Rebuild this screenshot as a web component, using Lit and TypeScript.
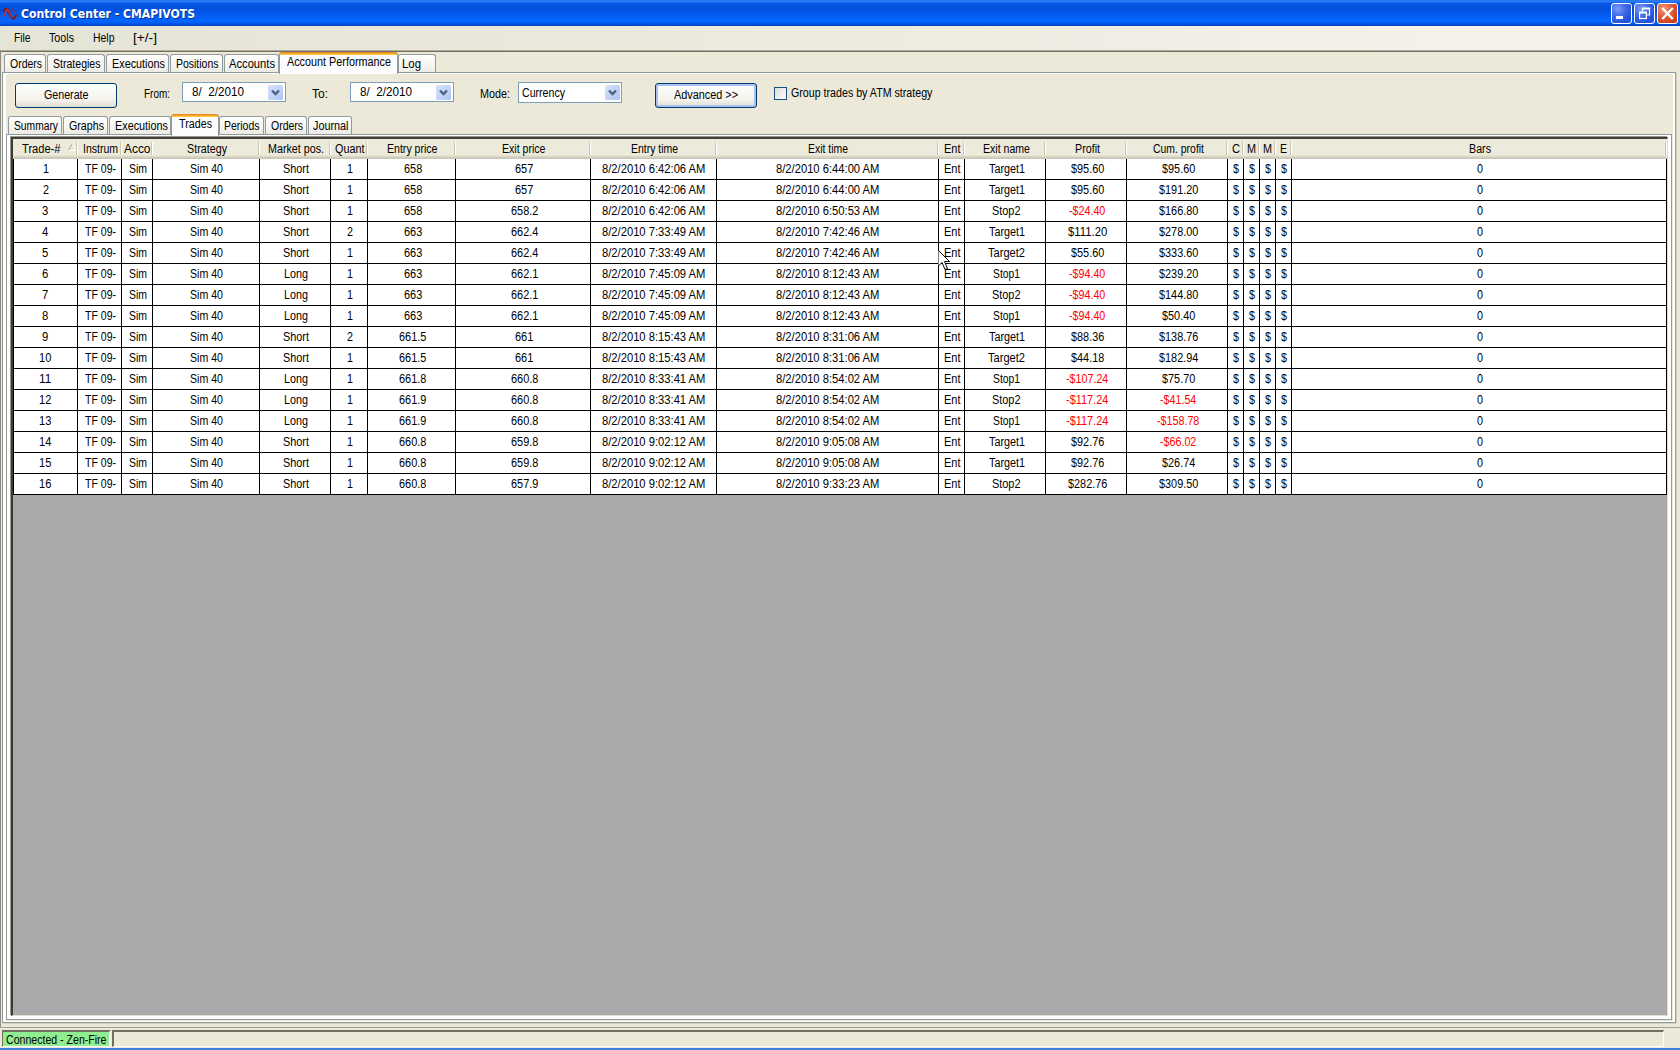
import { LitElement, html, css, svg } from 'lit';
import { customElement } from 'lit/decorators.js';

const UI_FONT = "12.5px 'Liberation Sans'";
const TITLE_FONT = "bold 13px 'DejaVu Sans Condensed'";
const pen = document.createElement('canvas').getContext('2d')!;

/** Condenses a label so that it takes exactly `width` pixels. */
function fit(text: string, width: number, font = UI_FONT) {
  pen.font = font;
  const ratio = width / pen.measureText(text).width;
  return html`<span class="fit" style="width:${width}px"><span class="glyphs" style="transform:scaleX(${ratio.toFixed(4)})">${text}</span></span>`;
}

const WIDTHS: Record<string, number> = {
  'TF 09-': 31, Sim: 18, 'Sim 40': 33, Short: 26, Long: 24, Ent: 16.5,
  Target1: 36, Target2: 37, Stop1: 27, Stop2: 28.5, $: 6, '0': 6, '1': 6, '2': 6,
};

function cellWidth(text: string): number {
  if (WIDTHS[text]) return WIDTHS[text];
  if (text.endsWith('AM')) return 104;
  let w = 0;
  for (const ch of text) w += ch === '.' || ch === '-' ? 3 : 6;
  return w + 0.3;
}

interface Column { title: string; width: number; textWidth: number; kind?: string }

const COLUMNS: Column[] = [
  { title: 'Trade-#', width: 65, textWidth: 38.5, kind: 'sorted' },
  { title: 'Instrum', width: 44, textWidth: 35 },
  { title: 'Acco', width: 31, textWidth: 26.5 },
  { title: 'Strategy', width: 107, textWidth: 40 },
  { title: 'Market pos.', width: 71, textWidth: 56 },
  { title: 'Quant', width: 37, textWidth: 29.5 },
  { title: 'Entry price', width: 88, textWidth: 50.5, kind: 'price' },
  { title: 'Exit price', width: 135, textWidth: 43.5, kind: 'price' },
  { title: 'Entry time', width: 126, textWidth: 47 },
  { title: 'Exit time', width: 222, textWidth: 40 },
  { title: 'Ent', width: 26, textWidth: 16.5 },
  { title: 'Exit name', width: 81, textWidth: 47, kind: 'price' },
  { title: 'Profit', width: 81, textWidth: 25, kind: 'price' },
  { title: 'Cum. profit', width: 101, textWidth: 51, kind: 'price' },
  { title: 'C', width: 16, textWidth: 8, kind: 'slim' },
  { title: 'M', width: 16, textWidth: 9, kind: 'slim' },
  { title: 'M', width: 16, textWidth: 9, kind: 'slim' },
  { title: 'E', width: 16, textWidth: 7, kind: 'slim' },
  { title: 'Bars', width: 375, textWidth: 22 },
];

const TRADES: string[][] = [
  ['Short', '1', '658', '657', '6:42:06', '6:44:00', 'Target1', '$95.60', '$95.60'],
  ['Short', '1', '658', '657', '6:42:06', '6:44:00', 'Target1', '$95.60', '$191.20'],
  ['Short', '1', '658', '658.2', '6:42:06', '6:50:53', 'Stop2', '-$24.40', '$166.80'],
  ['Short', '2', '663', '662.4', '7:33:49', '7:42:46', 'Target1', '$111.20', '$278.00'],
  ['Short', '1', '663', '662.4', '7:33:49', '7:42:46', 'Target2', '$55.60', '$333.60'],
  ['Long', '1', '663', '662.1', '7:45:09', '8:12:43', 'Stop1', '-$94.40', '$239.20'],
  ['Long', '1', '663', '662.1', '7:45:09', '8:12:43', 'Stop2', '-$94.40', '$144.80'],
  ['Long', '1', '663', '662.1', '7:45:09', '8:12:43', 'Stop1', '-$94.40', '$50.40'],
  ['Short', '2', '661.5', '661', '8:15:43', '8:31:06', 'Target1', '$88.36', '$138.76'],
  ['Short', '1', '661.5', '661', '8:15:43', '8:31:06', 'Target2', '$44.18', '$182.94'],
  ['Long', '1', '661.8', '660.8', '8:33:41', '8:54:02', 'Stop1', '-$107.24', '$75.70'],
  ['Long', '1', '661.9', '660.8', '8:33:41', '8:54:02', 'Stop2', '-$117.24', '-$41.54'],
  ['Long', '1', '661.9', '660.8', '8:33:41', '8:54:02', 'Stop1', '-$117.24', '-$158.78'],
  ['Short', '1', '660.8', '659.8', '9:02:12', '9:05:08', 'Target1', '$92.76', '-$66.02'],
  ['Short', '1', '660.8', '659.8', '9:02:12', '9:05:08', 'Target1', '$92.76', '$26.74'],
  ['Short', '1', '660.8', '657.9', '9:02:12', '9:33:23', 'Stop2', '$282.76', '$309.50'],
];

function tradeCells(t: string[], i: number): string[] {
  const [pos, qty, entry, exit, entryTime, exitTime, name, profit, cum] = t;
  return [
    `${i + 1}`, 'TF 09-', 'Sim', 'Sim 40', pos, qty, entry, exit,
    `8/2/2010 ${entryTime} AM`, `8/2/2010 ${exitTime} AM`, 'Ent', name, profit, cum,
    '$', '$', '$', '$', '0',
  ];
}

interface Tab { label: string; width: number; textWidth: number; pad: number; gap: number; active?: boolean }

const MAIN_TABS: Tab[] = [
  { label: 'Orders', width: 42, textWidth: 32, pad: 5, gap: 1 },
  { label: 'Strategies', width: 58, textWidth: 47.5, pad: 5, gap: 1 },
  { label: 'Executions', width: 63, textWidth: 53, pad: 5, gap: 1 },
  { label: 'Positions', width: 53, textWidth: 42.5, pad: 5, gap: 1 },
  { label: 'Accounts', width: 55, textWidth: 46, pad: 4, gap: 0 },
  { label: 'Account Performance', width: 119, textWidth: 104, pad: 7, gap: 0, active: true },
  { label: 'Log', width: 38, textWidth: 19, pad: 3, gap: 0 },
];

const INNER_TABS: Tab[] = [
  { label: 'Summary', width: 54, textWidth: 44, pad: 5, gap: 1 },
  { label: 'Graphs', width: 45, textWidth: 35, pad: 5, gap: 1 },
  { label: 'Executions', width: 62, textWidth: 53, pad: 5, gap: 0 },
  { label: 'Trades', width: 48, textWidth: 33, pad: 7, gap: 0, active: true },
  { label: 'Periods', width: 45, textWidth: 35.5, pad: 4, gap: 1 },
  { label: 'Orders', width: 42, textWidth: 32, pad: 5, gap: 1 },
  { label: 'Journal', width: 44, textWidth: 35.5, pad: 4, gap: 0 },
];

const tabStrip = (tabs: Tab[], extra: string) => html`
  <div class="tabs ${extra}">
    ${tabs.map(t => html`<div class="tab ${t.active ? 'active' : ''}"
      style="width:${t.width}px;padding-left:${t.pad}px;margin-right:${t.gap}px">${fit(t.label, t.textWidth)}</div>`)}
  </div>`;

const dropButton = html`
  <svg class="drop" width="16" height="16" viewBox="0 0 16 16">
    <defs><linearGradient id="g" x2="1" y2="1"><stop stop-color="#d7e2fe"/><stop offset="1" stop-color="#afc4f5"/></linearGradient></defs>
    <rect width="15" height="15" rx="1.5" fill="url(#g)"/>
    <path d="M4 5.5 7.5 9 11 5.5" fill="none" stroke="#4d6185" stroke-width="2.4"/>
  </svg>`;

const GLYPHS = {
  min: svg`<rect x="5" y="13" width="7" height="3" fill="#fff"/>`,
  restore: svg`<path d="M8.5 8V5.5h7V12H13" fill="none" stroke="#fff" stroke-width="1.2"/><path d="M8 5.5h8" stroke="#fff" stroke-width="2"/>
    <rect x="5.6" y="9.5" width="6.8" height="6" fill="none" stroke="#fff" stroke-width="1.2"/><path d="M5 9.5h8" stroke="#fff" stroke-width="2"/>`,
  close: svg`<path d="M6 5.8 15 15.2M15 5.8 6 15.2" stroke="#fff" stroke-width="2.3" stroke-linecap="square"/>`,
};

const caption = (kind: 'min' | 'restore' | 'close') => html`
  <button class="caption ${kind}"><svg width="21" height="21" viewBox="0 0 21 21">${GLYPHS[kind]}</svg></button>`;

@customElement('app-root')
export class AppRoot extends LitElement {
  static styles = css`
    :host { display: block; position: relative; width: 1680px; height: 1050px; overflow: hidden;
      font: 12.5px/14px 'Liberation Sans', Arial, sans-serif; color: #000; background: #ece9d8; }
    * { box-sizing: border-box; }
    .window { display: flex; flex-direction: column; height: 1050px; }
    .fit { display: block; white-space: pre; flex: none; text-align: left; }
    .glyphs { display: inline-block; transform-origin: 0 50%; vertical-align: top; }
    .title { height: 26px; flex: none; display: flex; align-items: center; padding: 1px 2px 0 3px;
      background: linear-gradient(#1263e0 0, #3b8dfd 1px, #1a6cf5 2px, #0756e3 4px, #0150dd 8px, #0259ee 14px, #0364fd 19px, #0364fd 22px, #0049cf 25px, #003fc0 26px); }
    .name { font: bold 13px/16px 'DejaVu Sans Condensed', sans-serif; color: #fff; text-shadow: 1px 1px 0 #0a2f94; margin-left: 2px; margin-top: 1px; flex: 1; }
    .caption { width: 21px; height: 21px; padding: 0; margin: 0 0 1px 2px; border: 1px solid #fff; border-radius: 3px; overflow: hidden; flex: none;
      background: radial-gradient(circle at 30% 25%, #7f9cf4 0, #4570ea 35%, #2350d6 75%, #2b64ee 100%); }
    .caption svg { display: block; margin: -1px; }
    .caption.close { background: radial-gradient(circle at 30% 25%, #f09a80 0, #e2603c 40%, #cb3b14 85%, #d8481c 100%); }
    .menu { height: 24px; flex: none; display: flex; align-items: center; padding-left: 14px;
      background: linear-gradient(90deg, #e5e5d7 0, #e9e8db 30%, #f4f2ea 90%); }
    .menu .fit { margin-right: 18.5px; margin-bottom: 1px; }
    .body { height: 977px; flex: none; padding: 1px 3px 0 2px; border: solid #8d8b7e; border-width: 1px 0 0 1px; border-top-color: #b0ad9e; display: flex; flex-direction: column;
      background: linear-gradient(#716f64 1px, #ece9d8 1px); }
    .tabs { display: flex; align-items: flex-end; height: 20px; flex: none; position: relative; z-index: 1; }
    .tab { height: 18px; border: 1px solid #919b9c; border-bottom: 0; border-radius: 3px 3px 0 0; display: flex; align-items: center; padding-top: 1px;
      background: linear-gradient(#fff, #f5f4ef 60%, #ecebe6); }
    .tab.active { height: 22px; margin-bottom: -2px; background: linear-gradient(#f7a92d 1px, #ffc73c 1px 2px, #fcfcfe 2px); border-top: 1px solid #e68b2c; padding-bottom: 3px; padding-top: 0; }
    .main { margin-left: 1px; }
    .outer { width: 1674px; height: 951px; flex: none; margin-left: -1px; border: 1px solid #919b9c; box-shadow: 1px 1px 0 #d6d2c2; padding: 1px 2px 1px 3px; background: #fff; display: flex; flex-direction: column; }
    .content { background: #ece9d8; flex: 1; display: flex; flex-direction: column; }
    .tools { height: 40px; flex: none; display: flex; align-items: flex-start; padding-left: 9px; }
    .tools > * { flex: none; }
    .btn { width: 102px; height: 25px; margin-top: 9px; border: 1px solid #003c74; border-radius: 3px; display: flex; align-items: center; justify-content: center; padding-bottom: 1px;
      background: linear-gradient(#fff, #f3f2ec 70%, #dedbd0); }
    .btn.default { box-shadow: inset 0 0 0 2px #a9c1f0, inset 0 -2px 0 #6982ee; }
    .lbl { margin-top: 13px; height: 14px; display: flex; }
    .lbl.high { margin-top: 12px; }
    .field { height: 20px; width: 104px; margin-top: 8px; border: 1px solid #7f9db9; background: #fff; display: flex; align-items: center; justify-content: space-between; padding-left: 9px; padding-right: 1px; }
    .field.combo { height: 21px; padding-left: 3px; padding-right: 0; }
    .drop { display: block; flex: none; margin-top: 1px; }
    .check { width: 13px; height: 13px; margin-top: 13px; border: 1px solid #1c5180; background: linear-gradient(135deg, #dcdcd7, #fff); }
    .inner { margin-left: 2px; }
    .pane { width: 1666px; height: 886px; flex: none; border: 1px solid #919b9c; background: #fff; padding: 2px 3px 3px 4px; }
    .bezel { height: 879px; border: 2px solid #404040; border-left-color: #3a3a36; border-bottom: 1px solid #e0dccf; border-right: 1px solid #e0dccf; background: #a9a9a9; box-shadow: -1px -1px 0 #9a988a; }
    .row { display: flex; width: 1654px; height: 21px; background: #fff; border-bottom: 1px solid #000; }
    .cell { flex: none; height: 20px; border-right: 1px solid #000; display: flex; align-items: center; justify-content: center; padding-left: 1px; overflow: hidden; }
    .cell.first { border-left: 1px solid #000; padding-left: 0; }
    .cell.price { padding-left: 3px; }
    .cell.neg { color: #f00; }
    .head { height: 20px; background: linear-gradient(#ebeadb 16px, #e2decd 17px, #d6d2c2 18px, #cbc7b8 19px); border-bottom: 0; }
    .head .cell, .head .cell.price { border: 0; padding: 0; position: relative; height: 20px; }
    .head .cell.slim { padding-right: 1px; }
    .head .cell.price { padding-left: 1px; }
    .head .cell::after { content: ''; position: absolute; right: 0; top: 3px; height: 13px; width: 2px; background: linear-gradient(90deg, #c7c5b2 50%, #fff 50%); }
    .head .cell.sorted { justify-content: flex-start; padding-left: 9px; gap: 7px; }
    .head svg { display: block; margin-top: -4px; }
    .status { flex: none; height: 21px; border-top: 1px solid #a5a293; background: #ece9d8; padding: 2px 0 0 2px; display: flex; }
    .slot { height: 17px; border: 1px solid #fff; border-top: 2px solid #716f64; border-left-color: #716f64; display: flex; align-items: center; padding-top: 2px; }
    .slot.ok { width: 109px; background: #90ee90; padding-left: 3px; border-right: 2px solid #f6f5ee; }
    .slot.rest { width: 1552px; margin-left: 1px; border-left-width: 2px; }
    .edge { height: 2px; flex: none; background: #3b80dc; }
    .cursor { position: absolute; left: 938px; top: 250px; }
  `;

  render() {
    return html`
      <div class="window">
        <div class="title">
          <svg width="16" height="16" viewBox="0 0 16 16">
            <path d="M0 6C2 2.500 4 1.500 5 4L8 10.500C10 14 12 13 14 8" fill="none" stroke="#7a1b2e" stroke-width="2.200"/>
            <path d="M1 10.500C2.500 5 4 2 5.500 4.500L9 11" fill="none" stroke="#c4302c" stroke-width="1.500"/>
            <path d="M8 5C9.500 2.500 10.500 3.500 11.500 6.500L14 10.500" fill="none" stroke="#54407e" stroke-width="1.500"/>
          </svg>
          <span class="name">${fit('Control Center - CMAPIVOTS', 174, TITLE_FONT)}</span>
          ${caption('min')}${caption('restore')}${caption('close')}
        </div>
        <div class="menu">
          ${fit('File', 16.5)}${fit('Tools', 25)}${fit('Help', 21.5)}${fit('[+/-]', 24)}
        </div>
        <div class="body">
          ${tabStrip(MAIN_TABS, 'main')}
          <div class="outer"><div class="content">
            <div class="tools">
              <div class="btn">${fit('Generate', 44.5)}</div>
              <div class="lbl" style="margin-left:27px">${fit('From:', 26)}</div>
              <div class="field" style="margin-left:12px">${fit('8/  2/2010', 52)}${dropButton}</div>
              <div class="lbl" style="margin-left:26px">${fit('To:', 16)}</div>
              <div class="field" style="margin-left:22px">${fit('8/  2/2010', 52)}${dropButton}</div>
              <div class="lbl" style="margin-left:26px">${fit('Mode:', 30)}</div>
              <div class="field combo" style="margin-left:8px">${fit('Currency', 43)}${dropButton}</div>
              <div class="btn default" style="margin-left:33px">${fit('Advanced >>', 64)}</div>
              <div class="check" style="margin-left:17px"></div>
              <div class="lbl high" style="margin-left:4px">${fit('Group trades by ATM strategy', 142)}</div>
            </div>
            ${tabStrip(INNER_TABS, 'inner')}
            <div class="pane"><div class="bezel">
              <div class="row head">
                ${COLUMNS.map(c => html`<div class="cell ${c.kind ?? ''}" style="width:${c.width}px">${fit(c.title, c.textWidth)}${c.kind === 'sorted'
                  ? html`<svg width="9" height="8" viewBox="0 0 9 8"><path d="M.5 7.500 4.500.5" stroke="#aca899" fill="none"/><path d="M4.500.5 8 7.500H.5" stroke="#fff" fill="none"/></svg>` : ''}</div>`)}
              </div>
              ${TRADES.map((t, i) => html`<div class="row">
                ${tradeCells(t, i).map((v, c) => html`<div class="cell ${c ? COLUMNS[c].kind ?? '' : 'first'} ${v.startsWith('-$') ? 'neg' : ''}"
                  style="width:${COLUMNS[c].width}px">${fit(v, cellWidth(v))}</div>`)}
              </div>`)}
            </div></div>
          </div></div>
        </div>
        <div class="status">
          <div class="slot ok">${fit('Connected - Zen-Fire', 100.5)}</div>
          <div class="slot rest"></div>
        </div>
        <div class="edge"></div>
      </div>
      <svg class="cursor" width="13" height="21" viewBox="0 0 13 21">
        <path d="M.5.500V16L4 12.500 7 19.500 9.500 18.500 6.500 11.500H11.500Z" fill="#fff"/>
        <path d="M.5.500 11.500 11.500H6.500L9.500 18.500 7 19.500 4 12.500.5 16" fill="none" stroke="#000"/>
      </svg>`;
  }
}
